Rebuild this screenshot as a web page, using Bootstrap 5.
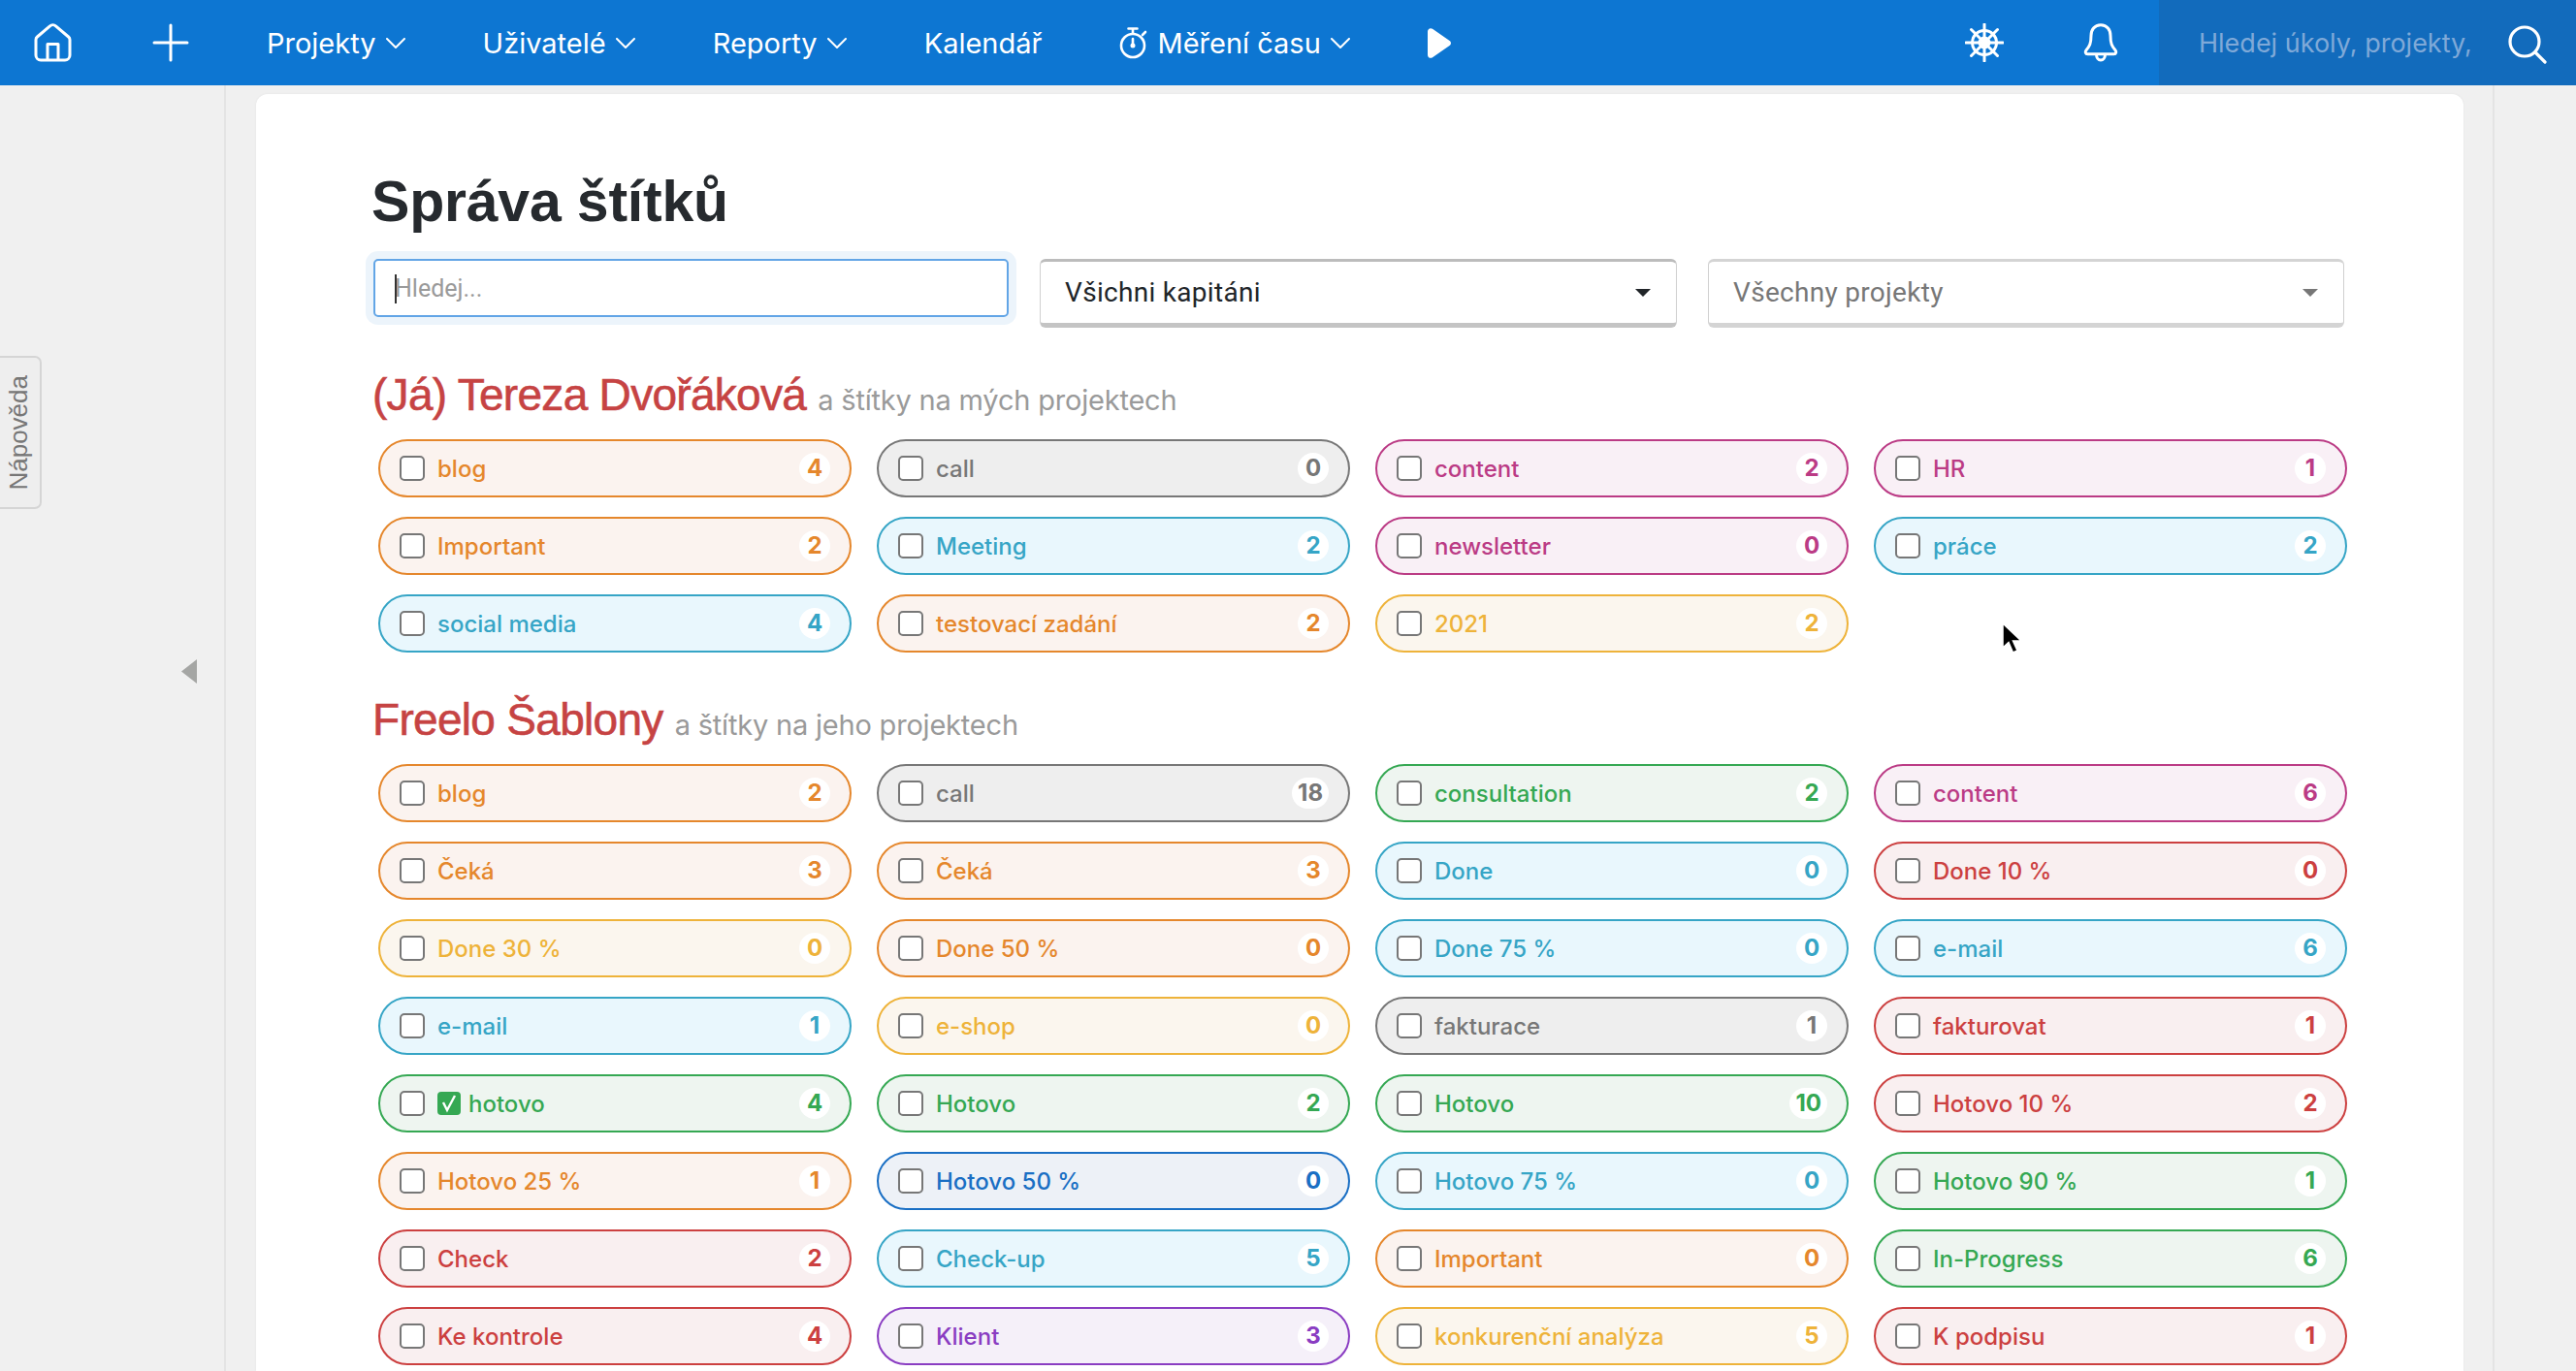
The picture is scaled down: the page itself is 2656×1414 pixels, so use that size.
<!DOCTYPE html>
<html lang="cs">
<head>
<meta charset="utf-8">
<title>Správa štítků</title>
<link href="https://cdn.jsdelivr.net/npm/bootstrap@5.3.0/dist/css/bootstrap.min.css" rel="stylesheet">
<style>
html,body{height:100%}
body{background:#f0f0f0;font-family:"Roboto",sans-serif;color:#212529;overflow:hidden}
.topbar{height:88px;background:#0d76d2;padding:0;flex-wrap:nowrap;align-items:stretch;flex-shrink:0}
.topmenu{gap:80px;padding-left:35px;font-family:"Inter",sans-serif}
.toplink{color:#fff;font-size:29px;line-height:1;display:flex;align-items:center;gap:10px;text-decoration:none;white-space:nowrap}
.toplink:hover{color:#fff}
.plusicon{margin-left:3px}
.topicons{gap:82px;padding-right:42px}
.topsearch{width:430px;background:#126bbc;padding:0 30px 0 41px;gap:39px}
.topsearch input{background:transparent;border:0;padding:0;font:400 27px "Inter",sans-serif;color:#fff;box-shadow:none;width:280px;flex:none}
.topsearch input::placeholder{color:#7fa9d8;opacity:1}
.topsearch input:focus{background:transparent;box-shadow:none;color:#fff}
.topsearch svg{margin-top:4px}
.siderail{width:233px;flex:none;border-right:2px solid #e4e4e4;padding:592px 28px 0 0}
.siderailr{flex:1 1 0;border-left:2px solid #e4e4e4}
.gutter{width:2337px;flex:none;padding:9px 30px 0 31px;min-height:0}
.sheet{background:#fff;border-radius:12px 12px 0 0;height:100%;overflow:hidden;padding:75px 120px 0 121px;position:relative;box-shadow:0 0 3px rgba(0,0,0,.05)}
.pagetitle{font:700 59px/72px "Liberation Sans",sans-serif;margin:0 0 23px -2px;color:#262a2e;letter-spacing:-.2px}
.filters{display:grid;grid-template-columns:655px 657px 656px;gap:32px;margin-bottom:42px;align-items:start}
.searchbox{position:relative}
.searchbox input{height:60px;border:2px solid #62a5e6;border-radius:5px;box-shadow:0 0 0 8px rgba(13,118,210,.08);font:400 25px "Roboto",sans-serif;padding:0 20px}
.searchbox input::placeholder{color:#9a9a9a;opacity:1}
.searchbox::after{content:"";position:absolute;left:22px;top:16px;width:2px;height:30px;background:#333}
.pickbox{height:71px;width:100%;background:#fff;border:1px solid #d0d0d0;border-top:3px solid #bcbcbc;border-bottom:5px solid #c4c4c4;border-radius:6px;display:flex;align-items:center;justify-content:space-between;font:400 28px "Roboto",sans-serif;letter-spacing:.3px;color:#212529;padding:0 26px 0 25px}
.pickbox:hover,.pickbox:active,.pickbox.show{background:#fff;color:#212529;border-color:#bcbcbc}
.pickmuted{color:#777;border-top-color:#d4d4d4;border-bottom-color:#d4d4d4}
.pickmuted:hover{color:#777}
.secthead{margin:0 0 18px -1px;font:400 46px/55px "Liberation Sans",sans-serif;color:#c64343;white-space:nowrap;letter-spacing:-.7px;-webkit-text-stroke:.6px #c64343}
.secthead span{font:400 29px "Inter",sans-serif;color:#9a9a9a;letter-spacing:-.2px;-webkit-text-stroke:0}
.chipgrid{display:grid;grid-template-columns:repeat(4,488px);gap:20px 26px;margin:0 0 42px 5px}
.chip{--c:#777;--b:#eee;height:60px;border:2px solid var(--c);background:var(--b);border-radius:30px;display:flex;align-items:center;padding:0 20px;color:var(--c);font:500 24px "Inter",sans-serif;margin:0;white-space:nowrap}
.chip .form-check-input{width:26px;height:26px;margin:0 13px 0 0;border:2px solid #777;border-radius:5px;flex:none;background-color:#fff}
.chipnum{margin-left:auto;min-width:32px;height:32px;padding:0 6px;border-radius:16px;background:#fff;text-align:center;line-height:32px;font-weight:700}
.chipemoji{margin-right:8px;flex:none}
.c-or{--c:#e5872c;--b:#fbf3ef}
.c-gy{--c:#777;--b:#eee}
.c-pk{--c:#bb3b85;--b:#f9f0f6}
.c-te{--c:#36a5c6;--b:#e9f7fd}
.c-ye{--c:#eeb33a;--b:#fbf6ee}
.c-gr{--c:#35a853;--b:#eef5f0}
.c-rd{--c:#cc4040;--b:#f9eff0}
.c-bl{--c:#1a6fc4;--b:#edf1f7}
.c-pu{--c:#8a3dc2;--b:#f5f0f9}
.helptab{position:absolute;left:-2px;top:367px;width:45px;height:158px;background:#eee;border:2px solid #d5d5d5;border-radius:0 7px 7px 0;display:flex;align-items:center;justify-content:center;padding-right:2px}
.helptab span{writing-mode:vertical-rl;transform:rotate(180deg);font:400 26px "Liberation Sans",sans-serif;color:#777}
.pointer{position:absolute;left:1800px;top:545px}
</style>
</head>
<body class="d-flex flex-column">
<nav class="navbar topbar">
  <div class="d-flex topmenu align-items-center flex-grow-1">
    <a class="toplink" href="#" aria-label="Domů"><svg width="39" height="40" viewBox="0 0 39 40" fill="none" stroke="#fff" stroke-width="3" stroke-linejoin="round"><path d="M2 33V17a4 4 0 0 1 1.4-3L16.5 2.8a4.5 4.5 0 0 1 6 0L35.600 14a4 4 0 0 1 1.400 3v16a5 5 0 0 1-5 5H7a5 5 0 0 1-5-5z"/><path d="M14 38V21.500h11V38"/></svg></a>
    <a class="toplink plusicon" href="#" aria-label="Přidat"><svg width="38" height="40" viewBox="0 0 38 40" fill="none" stroke="#fff" stroke-width="3" stroke-linecap="round"><path d="M19 2v36M2 20h34"/></svg></a>
    <a class="toplink" href="#">Projekty <svg width="20" height="11" viewBox="0 0 20 11" fill="none" stroke="#fff" stroke-width="2" stroke-linecap="round" stroke-linejoin="round"><path d="M1 1l9 9 9-9"/></svg></a>
    <a class="toplink" href="#">Uživatelé <svg width="20" height="11" viewBox="0 0 20 11" fill="none" stroke="#fff" stroke-width="2" stroke-linecap="round" stroke-linejoin="round"><path d="M1 1l9 9 9-9"/></svg></a>
    <a class="toplink" href="#">Reporty <svg width="20" height="11" viewBox="0 0 20 11" fill="none" stroke="#fff" stroke-width="2" stroke-linecap="round" stroke-linejoin="round"><path d="M1 1l9 9 9-9"/></svg></a>
    <a class="toplink" href="#">Kalendář</a>
    <a class="toplink" href="#"><svg width="29" height="33" viewBox="0 0 29 33" fill="none" stroke="#fff" stroke-width="2.600" stroke-linecap="round"><circle cx="14" cy="19" r="12"/><path d="M14 6V2M9.500 1.500h9M24 8l3-3M14 19v-7"/><circle cx="14" cy="19" r="1.200" fill="#fff"/></svg>Měření času <svg width="20" height="11" viewBox="0 0 20 11" fill="none" stroke="#fff" stroke-width="2" stroke-linecap="round" stroke-linejoin="round"><path d="M1 1l9 9 9-9"/></svg></a>
    <a class="toplink" href="#" aria-label="Spustit"><svg width="24" height="31" viewBox="0 0 24 31" fill="#fff"><path d="M0 3.500C0 .6 2.800-.8 5 .8l17.600 12.200c1.800 1.200 1.800 3.800 0 5L5 30.200c-2.200 1.600-5 .2-5-2.700z"/></svg></a>
  </div>
  <div class="d-flex topicons align-items-center">
    <a class="toplink" href="#" aria-label="Nastavení"><svg width="40" height="40" viewBox="0 0 40 40" fill="none" stroke="#fff" stroke-linecap="round"><circle cx="20" cy="20" r="12.500" stroke-width="3"/><circle cx="20" cy="20" r="5" stroke-width="3"/><path stroke-width="3" d="M20 1v38M1 20h38M6.500 6.500l27 27M33.500 6.500l-27 27"/></svg></a>
    <a class="toplink" href="#" aria-label="Oznámení"><svg width="36" height="40" viewBox="0 0 36 40" fill="none" stroke="#fff" stroke-width="3" stroke-linejoin="round"><path d="M18 1.800c-6.500 0-10 5-10 11 0 8-1.500 11-5 15-1.300 1.500-1 4 1.500 4h27c2.500 0 2.800-2.500 1.500-4-3.500-4-5-7-5-15 0-6-3.500-11-10-11z"/><path d="M13.500 32c0 3.500 2 6 4.500 6s4.500-2.500 4.500-6"/></svg></a>
  </div>
  <div class="d-flex topsearch align-items-center">
    <input class="form-control" type="text" placeholder="Hledej úkoly, projekty," aria-label="Hledej">
    <svg width="40" height="40" viewBox="0 0 40 40" fill="none" stroke="#fff" stroke-width="3.200" stroke-linecap="round"><circle cx="17" cy="17" r="15"/><path d="M28 28l10 10"/></svg>
  </div>
</nav>
<div class="d-flex flex-grow-1 overflow-hidden">
  <aside class="siderail d-flex justify-content-end align-items-start"><svg width="16" height="25" viewBox="0 0 16 25" fill="#a5a6a4"><path d="M16 0v25L0 12.500z"/></svg></aside>
  <main class="gutter">
    <div class="sheet">
      <h1 class="pagetitle">Správa štítků</h1>
      <div class="filters">
        <div class="searchbox"><input class="form-control" type="text" placeholder="Hledej..." aria-label="Hledej"></div>
        <button class="btn dropdown-toggle pickbox" type="button">Všichni kapitáni</button>
        <button class="btn dropdown-toggle pickbox pickmuted" type="button">Všechny projekty</button>
      </div>
      <h2 class="secthead">(Já) Tereza Dvořáková <span>a štítky na mých projektech</span></h2>
      <div class="chipgrid">
        <label class="chip c-or"><input class="form-check-input" type="checkbox">blog<span class="chipnum">4</span></label>
        <label class="chip c-gy"><input class="form-check-input" type="checkbox">call<span class="chipnum">0</span></label>
        <label class="chip c-pk"><input class="form-check-input" type="checkbox">content<span class="chipnum">2</span></label>
        <label class="chip c-pk"><input class="form-check-input" type="checkbox">HR<span class="chipnum">1</span></label>
        <label class="chip c-or"><input class="form-check-input" type="checkbox">Important<span class="chipnum">2</span></label>
        <label class="chip c-te"><input class="form-check-input" type="checkbox">Meeting<span class="chipnum">2</span></label>
        <label class="chip c-pk"><input class="form-check-input" type="checkbox">newsletter<span class="chipnum">0</span></label>
        <label class="chip c-te"><input class="form-check-input" type="checkbox">práce<span class="chipnum">2</span></label>
        <label class="chip c-te"><input class="form-check-input" type="checkbox">social media<span class="chipnum">4</span></label>
        <label class="chip c-or"><input class="form-check-input" type="checkbox">testovací zadání<span class="chipnum">2</span></label>
        <label class="chip c-ye"><input class="form-check-input" type="checkbox">2021<span class="chipnum">2</span></label>
      </div>
      <h2 class="secthead">Freelo Šablony <span>a štítky na jeho projektech</span></h2>
      <div class="chipgrid">
        <label class="chip c-or"><input class="form-check-input" type="checkbox">blog<span class="chipnum">2</span></label>
        <label class="chip c-gy"><input class="form-check-input" type="checkbox">call<span class="chipnum">18</span></label>
        <label class="chip c-gr"><input class="form-check-input" type="checkbox">consultation<span class="chipnum">2</span></label>
        <label class="chip c-pk"><input class="form-check-input" type="checkbox">content<span class="chipnum">6</span></label>
        <label class="chip c-or"><input class="form-check-input" type="checkbox">Čeká<span class="chipnum">3</span></label>
        <label class="chip c-or"><input class="form-check-input" type="checkbox">Čeká<span class="chipnum">3</span></label>
        <label class="chip c-te"><input class="form-check-input" type="checkbox">Done<span class="chipnum">0</span></label>
        <label class="chip c-rd"><input class="form-check-input" type="checkbox">Done 10 %<span class="chipnum">0</span></label>
        <label class="chip c-ye"><input class="form-check-input" type="checkbox">Done 30 %<span class="chipnum">0</span></label>
        <label class="chip c-or"><input class="form-check-input" type="checkbox">Done 50 %<span class="chipnum">0</span></label>
        <label class="chip c-te"><input class="form-check-input" type="checkbox">Done 75 %<span class="chipnum">0</span></label>
        <label class="chip c-te"><input class="form-check-input" type="checkbox">e-mail<span class="chipnum">6</span></label>
        <label class="chip c-te"><input class="form-check-input" type="checkbox">e-mail<span class="chipnum">1</span></label>
        <label class="chip c-ye"><input class="form-check-input" type="checkbox">e-shop<span class="chipnum">0</span></label>
        <label class="chip c-gy"><input class="form-check-input" type="checkbox">fakturace<span class="chipnum">1</span></label>
        <label class="chip c-rd"><input class="form-check-input" type="checkbox">fakturovat<span class="chipnum">1</span></label>
        <label class="chip c-gr"><input class="form-check-input" type="checkbox"><svg class="chipemoji" width="24" height="24" viewBox="0 0 24 24" aria-hidden="true"><rect width="24" height="24" rx="4" fill="#35a853"/><path d="M6 11l4 8 8-15" fill="none" stroke="#fff" stroke-width="2.400"/></svg>hotovo<span class="chipnum">4</span></label>
        <label class="chip c-gr"><input class="form-check-input" type="checkbox">Hotovo<span class="chipnum">2</span></label>
        <label class="chip c-gr"><input class="form-check-input" type="checkbox">Hotovo<span class="chipnum">10</span></label>
        <label class="chip c-rd"><input class="form-check-input" type="checkbox">Hotovo 10 %<span class="chipnum">2</span></label>
        <label class="chip c-or"><input class="form-check-input" type="checkbox">Hotovo 25 %<span class="chipnum">1</span></label>
        <label class="chip c-bl"><input class="form-check-input" type="checkbox">Hotovo 50 %<span class="chipnum">0</span></label>
        <label class="chip c-te"><input class="form-check-input" type="checkbox">Hotovo 75 %<span class="chipnum">0</span></label>
        <label class="chip c-gr"><input class="form-check-input" type="checkbox">Hotovo 90 %<span class="chipnum">1</span></label>
        <label class="chip c-rd"><input class="form-check-input" type="checkbox">Check<span class="chipnum">2</span></label>
        <label class="chip c-te"><input class="form-check-input" type="checkbox">Check-up<span class="chipnum">5</span></label>
        <label class="chip c-or"><input class="form-check-input" type="checkbox">Important<span class="chipnum">0</span></label>
        <label class="chip c-gr"><input class="form-check-input" type="checkbox">In-Progress<span class="chipnum">6</span></label>
        <label class="chip c-rd"><input class="form-check-input" type="checkbox">Ke kontrole<span class="chipnum">4</span></label>
        <label class="chip c-pu"><input class="form-check-input" type="checkbox">Klient<span class="chipnum">3</span></label>
        <label class="chip c-ye"><input class="form-check-input" type="checkbox">konkurenční analýza<span class="chipnum">5</span></label>
        <label class="chip c-rd"><input class="form-check-input" type="checkbox">K podpisu<span class="chipnum">1</span></label>
      </div>
      <svg class="pointer" width="24" height="34" viewBox="0 0 24 34" aria-hidden="true"><path d="M1 1v25l6-5.500 4.500 10.500 4.500-2-4.500-10H20z" fill="#000" stroke="#fff" stroke-width="1.500"/></svg>
    </div>
  </main>
  <aside class="siderailr"></aside>
</div>
<a class="helptab text-decoration-none" href="#"><span>Nápověda</span></a>
<script src="https://cdn.jsdelivr.net/npm/bootstrap@5.3.0/dist/js/bootstrap.bundle.min.js"></script>
</body>
</html>
